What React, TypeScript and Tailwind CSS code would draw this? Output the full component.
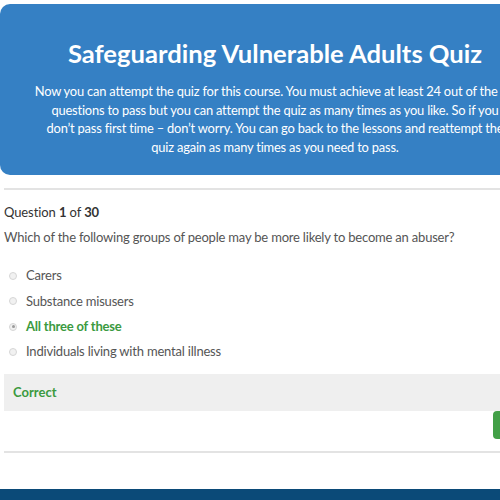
export default function App() {
  const font = { fontFamily: 'Lato, "Open Sans", sans-serif' };
  return (
    <div className="w-[500px] h-[500px] overflow-hidden bg-white relative flex flex-col" style={font}>
      <div className="mt-[4px] w-[550px] h-[171px] shrink-0 rounded-[10px] bg-[#3580c4] text-white flex flex-col items-center pt-[31px]">
        <h1 className="text-[25.6px] leading-[36px] font-bold whitespace-nowrap">Safeguarding Vulnerable Adults Quiz</h1>
        <p className="mt-[11px] text-[12.9px] leading-[18.7px] tracking-[-0.2px] text-center whitespace-nowrap">
          Now you can attempt the quiz for this course. You must achieve at least 24 out of the 30<br />
          questions to pass but you can attempt the quiz as many times as you like. So if you<br />
          don’t pass first time – don’t worry. You can go back to the lessons and reattempt the<br />
          quiz again as many times as you need to pass.
        </p>
      </div>
      <div className="ml-[4px] mt-[13px] h-[2px] bg-[#e3e3e3] shrink-0" />
      <div className="pl-[4px] pt-[13px] text-[13px] leading-[18px] text-[#333] tracking-[-0.1px]">
        Question <b>1</b> of <b>30</b>
      </div>
      <div className="pl-[4px] mt-[6px] text-[13px] leading-[20px] text-[#555] tracking-[-0.2px] whitespace-nowrap">
        Which of the following groups of people may be more likely to become an abuser?
      </div>
      <div className="mt-[19px] flex flex-col gap-[5.4px] pl-[9px]">
        {[
          ['Carers', false],
          ['Substance misusers', false],
          ['All three of these', true],
          ['Individuals living with mental illness', false],
        ].map(([label, sel]) => (
          <div key={label as string} className="flex items-center h-[20px]">
            <span className="w-[8px] h-[8px] rounded-full border border-[#d6d6d6] bg-[#f1f1f1] flex items-center justify-center">
              {sel ? <span className="w-[3px] h-[3px] rounded-full bg-[#9a9a9a]" /> : null}
            </span>
            <span className={sel ? 'ml-[9px] text-[13px] tracking-[-0.2px] font-bold text-[#3b9a3f]' : 'ml-[9px] text-[13px] tracking-[-0.2px] text-[#555]'}>
              {label as string}
            </span>
          </div>
        ))}
      </div>
      <div className="ml-[4px] mt-[12px] h-[37px] bg-[#efefef] flex items-center pl-[9px] shrink-0">
        <span className="text-[13px] font-bold text-[#3b9a3f]">Correct</span>
      </div>
      <div className="flex justify-end shrink-0">
        <div className="w-[12px] h-[28px] rounded-l-[4px] bg-[#43a047] mr-[-5px]" />
      </div>
      <div className="ml-[4px] mt-[12px] h-[2px] bg-[#e3e3e3] shrink-0" />
      <div className="mt-auto h-[11px] bg-[#0b4a78] shrink-0" />
    </div>
  );
}
